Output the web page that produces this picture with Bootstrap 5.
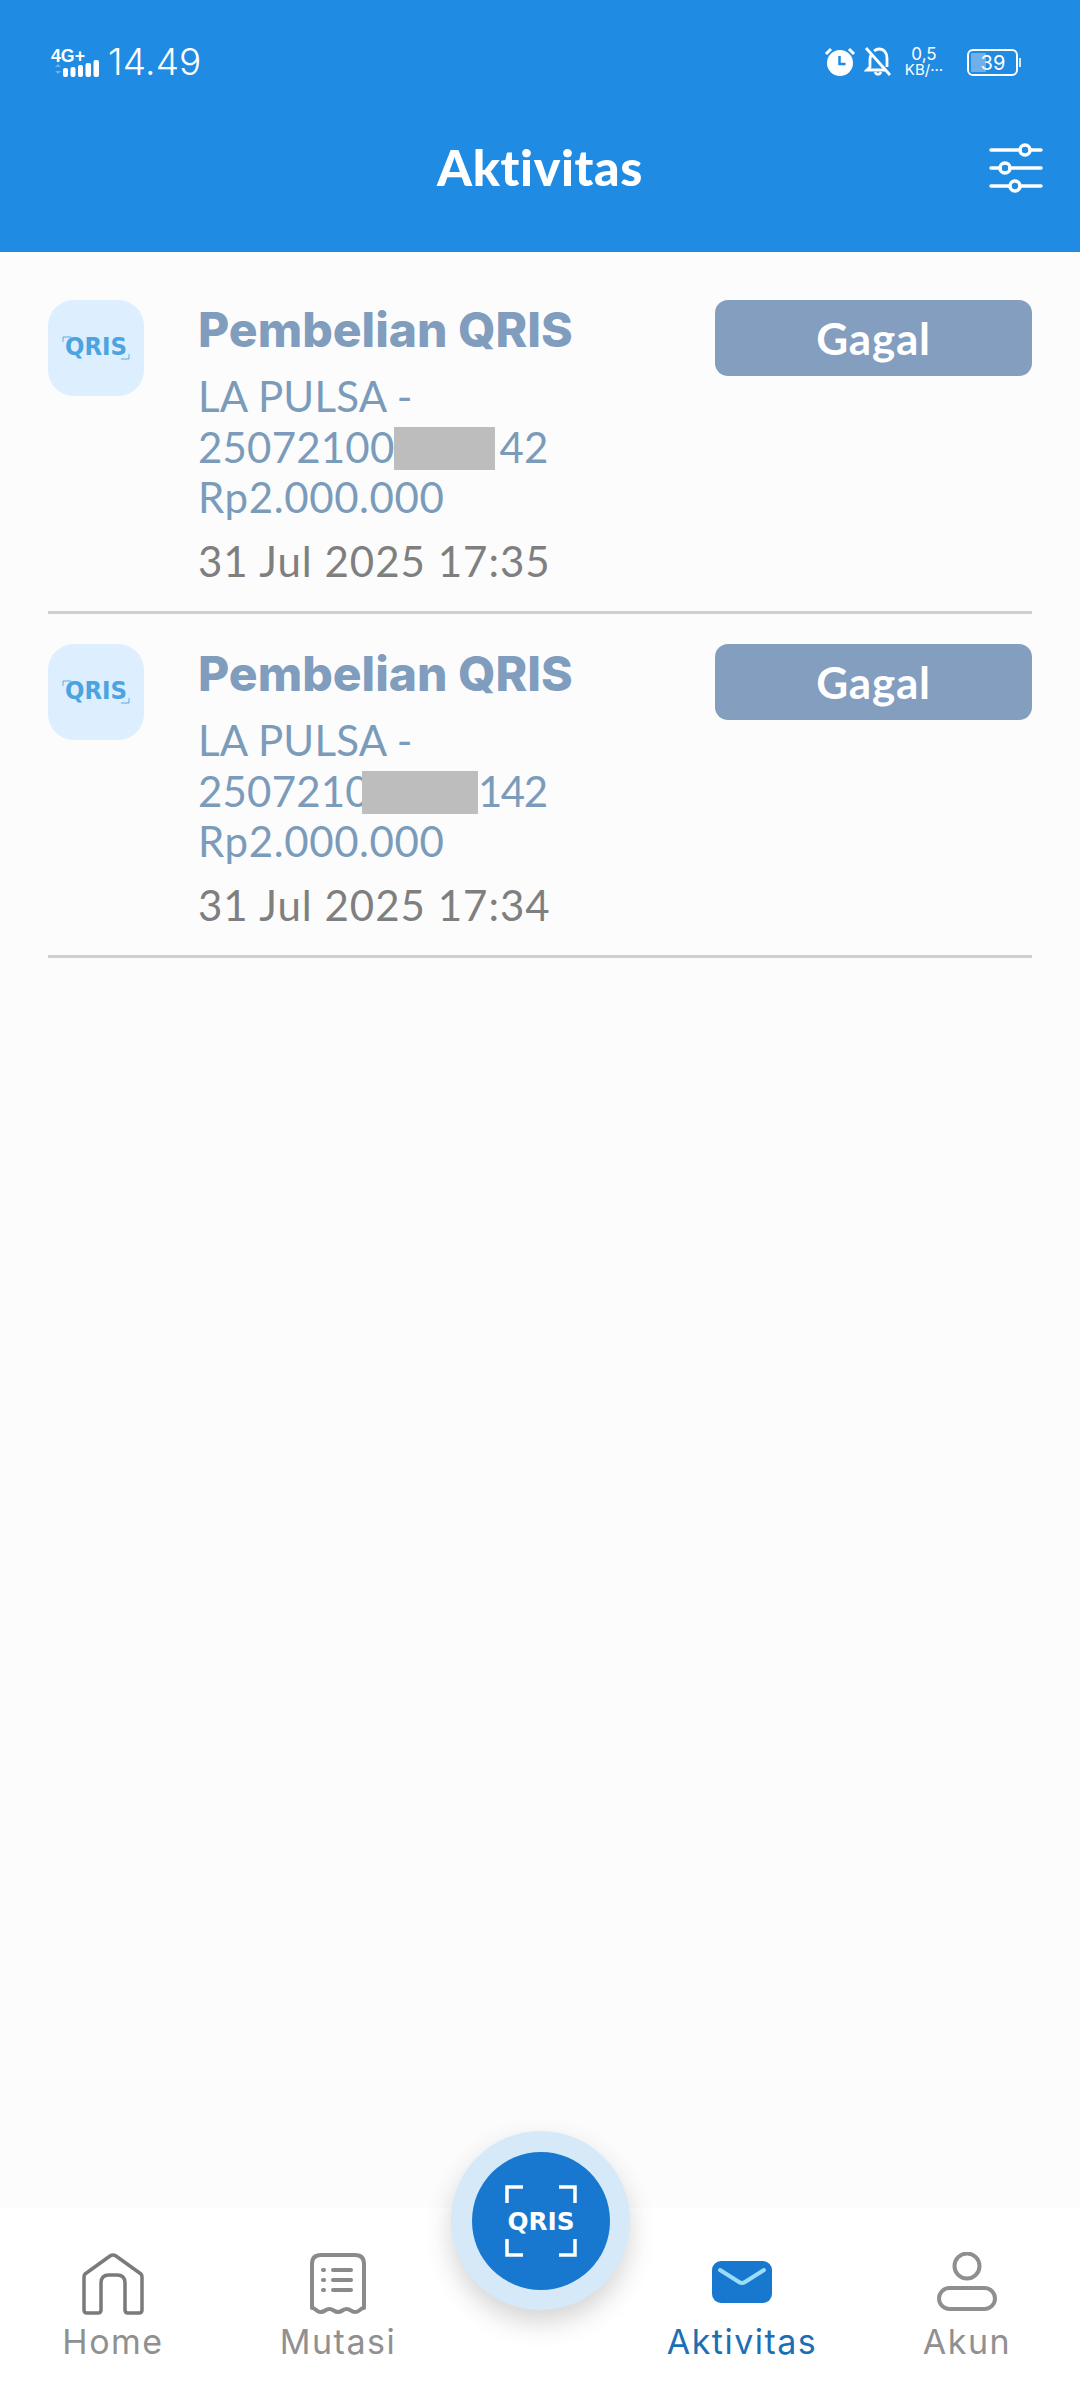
<!DOCTYPE html>
<html lang="id">
<head>
<meta charset="UTF-8">
<meta name="viewport" content="width=device-width, initial-scale=1.0">
<title>Aktivitas</title>
<link href="https://cdn.jsdelivr.net/npm/bootstrap@5.3.0/dist/css/bootstrap.min.css" rel="stylesheet">
<style>
    body { background: #fcfcfc; font-family: "Lato", sans-serif; width: 1080px; height: 2400px; overflow: hidden; }
    .app-shell { height: 2400px; }
    .top-head { background: #1f8be3; height: 252px; padding: 44px 37px 0; color: #fff; }
    .status-row { height: 36px; padding: 0 22px 0 11px; }
    .net-ico { margin-left: 3px; margin-right: 7px; }
    .clock-txt { font-family: "Inter", sans-serif; font-weight: 300; font-size: 37px; line-height: 36px; letter-spacing: .2px; }
    .speed-txt { font-family: "Inter", sans-serif; width: 44px; text-align: center; font-size: 17px; line-height: 15px; margin: 0 21px 0 10px; }
    .speed-txt span { display: block; font-size: 15px; }
    .batt-box { width: 54px; height: 27px; }
    .title-row { display: grid; grid-template-columns: 1fr auto 1fr; margin-top: 57px; }
    .page-title { font-weight: 900; font-size: 50px; line-height: 60px; margin: 0; letter-spacing: .6px; }
    .slider-ico { justify-self: end; margin-top: 2px; }
    .act-list { padding: 18px 48px 0; background: transparent; }
    .act-list.list-group-flush > .act-row.list-group-item { background: transparent; padding: 30px 0 0; height: 344px; border-width: 0 0 3px; border-style: solid; border-color: #cfcfcf; border-radius: 0; gap: 54px; }
    .tile { width: 96px; height: 96px; background: #ddeefe; border-radius: 26px; flex: none; }
    .act-title { font-family: "Inter", sans-serif; font-weight: 800; font-size: 48px; line-height: 56px; color: #809dbe; margin: 2px 0 13px; white-space: nowrap; }
    .act-line { font-size: 42px; line-height: 50.500px; color: #7b9bbb; white-space: nowrap; letter-spacing: .2px; }
    .act-amount { letter-spacing: .6px; }
    .num-tight { letter-spacing: -1.500px; }
    .mask { display: inline-block; height: 43px; background: #bdbdbd; vertical-align: -7px; }
    .mask-a { width: 101px; margin-right: 4px; }
    .mask-b { width: 116px; margin-left: -8px; }
    .act-date { font-size: 42px; line-height: 50px; color: #7f7f7f; margin-top: 13px; letter-spacing: 1px; white-space: nowrap; }
    .status-pill { width: 317px; height: 76px; background: #839ebf; border-radius: 13px; color: #fff; font-weight: 700; font-size: 44px; line-height: 76px; padding: 0; margin-left: auto; flex: none; letter-spacing: .8px; }
    .bot-nav { position: fixed; left: 0; right: 0; bottom: 0; height: 192px; background: #fff; display: grid; grid-template-columns: 226px 224px 180px 224px 226px; padding-top: 44px; }
    .nav-cell { display: flex; flex-direction: column; align-items: center; color: #909090; font-family: "Inter", sans-serif; font-size: 34px; line-height: 42px; letter-spacing: 1.500px; }
    .nav-ico { height: 64px; margin-bottom: 5px; display: block; }
    .nav-on { color: #1b6fb5; }
    .fab-ring { position: absolute; left: 451px; top: -77px; width: 179px; height: 179px; border-radius: 50%; background: #d6e9f8; box-shadow: 0 12px 26px rgba(60,60,60,.22); }
    .fab-core { width: 138px; height: 138px; border-radius: 50%; background: #1878cf; }
</style>
</head>
<body>
<div class="app-shell">
    <div class="top-head">
        <div class="status-row d-flex align-items-center">
            <svg class="net-ico" width="50" height="32" viewBox="0 0 50 32">
                <text x="0" y="16" fill="#fff" font-family="Liberation Sans" font-weight="700" font-size="19" textLength="34" lengthAdjust="spacingAndGlyphs">4G+</text>
                <path d="M4 21l3-3 3 3zM4 25l3 3 3-3z" fill="#6db0ec"/>
                <g fill="#fff"><rect x="12" y="22" width="5" height="9" rx="2"/><rect x="19.500" y="21" width="5" height="10" rx="2"/><rect x="27" y="19" width="5" height="12" rx="2"/><rect x="34.500" y="17" width="5.500" height="14" rx="2"/><rect x="42.500" y="14" width="5.500" height="17" rx="2"/></g>
            </svg>
            <span class="clock-txt">14.49</span>
            <div class="ms-auto d-flex align-items-center">
                <svg width="32" height="30" viewBox="0 0 32 30" class="me-2">
                    <circle cx="16" cy="16" r="13" fill="#fff"/>
                    <path d="M15.500 9v8h6" fill="none" stroke="#1f8be3" stroke-width="2.500"/>
                    <path d="M2 7l5-5M30 7l-5-5" stroke="#fff" stroke-width="3" fill="none"/>
                </svg>
                <svg width="28" height="30" viewBox="0 0 28 30">
                    <path d="M7 8c-1 2-1 3-1 5v7l-3 3h19M10 4c2-1.500 3-2 5-2 5 0 8 4 8 9v9" fill="none" stroke="#fff" stroke-width="2.800"/>
                    <path d="M11 25c1 3 5 3 6 0" fill="none" stroke="#fff" stroke-width="2.500"/>
                    <path d="M2 1l24 27" stroke="#fff" stroke-width="2.800"/>
                </svg>
                <div class="speed-txt">0,5<span>KB/···</span></div>
                <svg class="batt-box" viewBox="0 0 54 27">
                    <rect x="1" y="1" width="49" height="25" rx="5" fill="none" stroke="#fff" stroke-width="2"/>
                    <rect x="4" y="4" width="15" height="19" rx="1" fill="#6fb0ec"/>
                    <rect x="52" y="9" width="2" height="9" fill="#d5e8fa"/>
                    <text x="26" y="21" text-anchor="middle" fill="#fff" font-family="Inter" font-size="20">39</text>
                </svg>
            </div>
        </div>
        <div class="title-row align-items-center">
            <span></span>
            <h1 class="page-title">Aktivitas</h1>
            <svg class="slider-ico" width="56" height="52" viewBox="0 0 56 52">
                <g stroke="#fff" stroke-width="3.500" stroke-linecap="round" fill="none">
                    <path d="M4 8h29M43 8h11M4 26h9M23 26h31M4 44h19M33 44h21"/>
                    <circle cx="38" cy="8" r="5"/><circle cx="18" cy="26" r="5"/><circle cx="28" cy="44" r="5"/>
                </g>
            </svg>
        </div>
    </div>

    <div class="list-group list-group-flush act-list">
        <div class="list-group-item d-flex act-row">
            <div class="tile d-flex align-items-center justify-content-center">
                <svg width="96" height="46" viewBox="-13 -10 96 46">
                    <path d="M2 7V2h8M68 19v5h-8" fill="none" stroke="#5aace3" stroke-width="1"/>
                    <text x="35" y="20" text-anchor="middle" fill="#4ba3e0" font-family="DejaVu Sans" font-weight="700" font-size="25" textLength="62" lengthAdjust="spacingAndGlyphs">QRIS</text>
                </svg>
            </div>
            <div>
                <div class="act-title">Pembelian QRIS</div>
                <div class="act-line">LA PULSA -</div>
                <div class="act-line">25072100<span class="mask mask-a"></span>42</div>
                <div class="act-line act-amount">Rp2.000.000</div>
                <div class="act-date">31 Jul 2025 17:35</div>
            </div>
            <div class="badge status-pill">Gagal</div>
        </div>
        <div class="list-group-item d-flex act-row">
            <div class="tile d-flex align-items-center justify-content-center">
                <svg width="96" height="46" viewBox="-13 -10 96 46">
                    <path d="M2 7V2h8M68 19v5h-8" fill="none" stroke="#5aace3" stroke-width="1"/>
                    <text x="35" y="20" text-anchor="middle" fill="#4ba3e0" font-family="DejaVu Sans" font-weight="700" font-size="25" textLength="62" lengthAdjust="spacingAndGlyphs">QRIS</text>
                </svg>
            </div>
            <div>
                <div class="act-title">Pembelian QRIS</div>
                <div class="act-line">LA PULSA -</div>
                <div class="act-line">2507210<span class="mask mask-b"></span><span class="num-tight">142</span></div>
                <div class="act-line act-amount">Rp2.000.000</div>
                <div class="act-date">31 Jul 2025 17:34</div>
            </div>
            <div class="badge status-pill">Gagal</div>
        </div>
    </div>

    <div class="bot-nav">
        <div class="nav-cell">
            <svg class="nav-ico" width="64" height="64" viewBox="0 0 64 64">
                <path d="M4 22 29 4q3-2 6 0l25 18q1 1 1 3v33q0 3-3 3H47q-3 0-3-3V31q0-8-8-8h-8q-8 0-8 8v27q0 3-3 3H6q-3 0-3-3V25q0-2 1-3z" fill="none" stroke="#7a7a7a" stroke-width="3.500" stroke-linejoin="round"/>
            </svg>
            Home
        </div>
        <div class="nav-cell">
            <svg class="nav-ico" width="58" height="64" viewBox="0 0 58 64">
                <path d="M3 56V12q0-9 9-9h34q9 0 9 9v44c-4 0-4 4-8.700 4s-4.500-3-8.700-3-4.300 3-8.600 3-4.300-3-8.600-3-4.300 3-8.700 3S7 56 3 56z" fill="none" stroke="#8a8a8a" stroke-width="4" stroke-linejoin="round"/>
                <g fill="#8a8a8a"><rect x="12" y="16" width="5" height="4" rx="2"/><rect x="12" y="26" width="5" height="4" rx="2"/><rect x="12" y="36" width="5" height="4" rx="2"/><rect x="22" y="16" width="22" height="4" rx="2"/><rect x="22" y="26" width="22" height="4" rx="2"/><rect x="22" y="36" width="22" height="4" rx="2"/></g>
            </svg>
            Mutasi
        </div>
        <div></div>
        <div class="nav-cell nav-on">
            <svg class="nav-ico" width="60" height="64" viewBox="0 0 60 64">
                <rect x="0" y="9" width="60" height="42" rx="9" fill="#1878cf"/>
                <path d="M8 18l19 12q3 2 6 0l19-12" fill="none" stroke="#9bdcf8" stroke-width="4" stroke-linecap="round"/>
            </svg>
            Aktivitas
        </div>
        <div class="nav-cell">
            <svg class="nav-ico" width="62" height="64" viewBox="0 0 62 64">
                <circle cx="31" cy="14" r="12.500" fill="none" stroke="#8f8f8f" stroke-width="4"/>
                <rect x="3" y="36" width="56" height="21" rx="10.500" fill="none" stroke="#8f8f8f" stroke-width="4"/>
            </svg>
            Akun
        </div>
        <div class="fab-ring d-flex align-items-center justify-content-center">
            <div class="fab-core d-flex align-items-center justify-content-center">
                <svg width="76" height="76" viewBox="0 0 76 76">
                    <path d="M20 4H4v16M56 4h16v16M4 56v16h16M72 56v16H56" fill="none" stroke="#fff" stroke-width="3.500"/>
                    <text x="38" y="47" text-anchor="middle" fill="#fff" font-family="DejaVu Sans" font-weight="700" font-size="25" textLength="67" lengthAdjust="spacingAndGlyphs">QRIS</text>
                </svg>
            </div>
        </div>
    </div>
</div>
<script src="https://cdn.jsdelivr.net/npm/bootstrap@5.3.0/dist/js/bootstrap.bundle.min.js"></script>
</body>
</html>
